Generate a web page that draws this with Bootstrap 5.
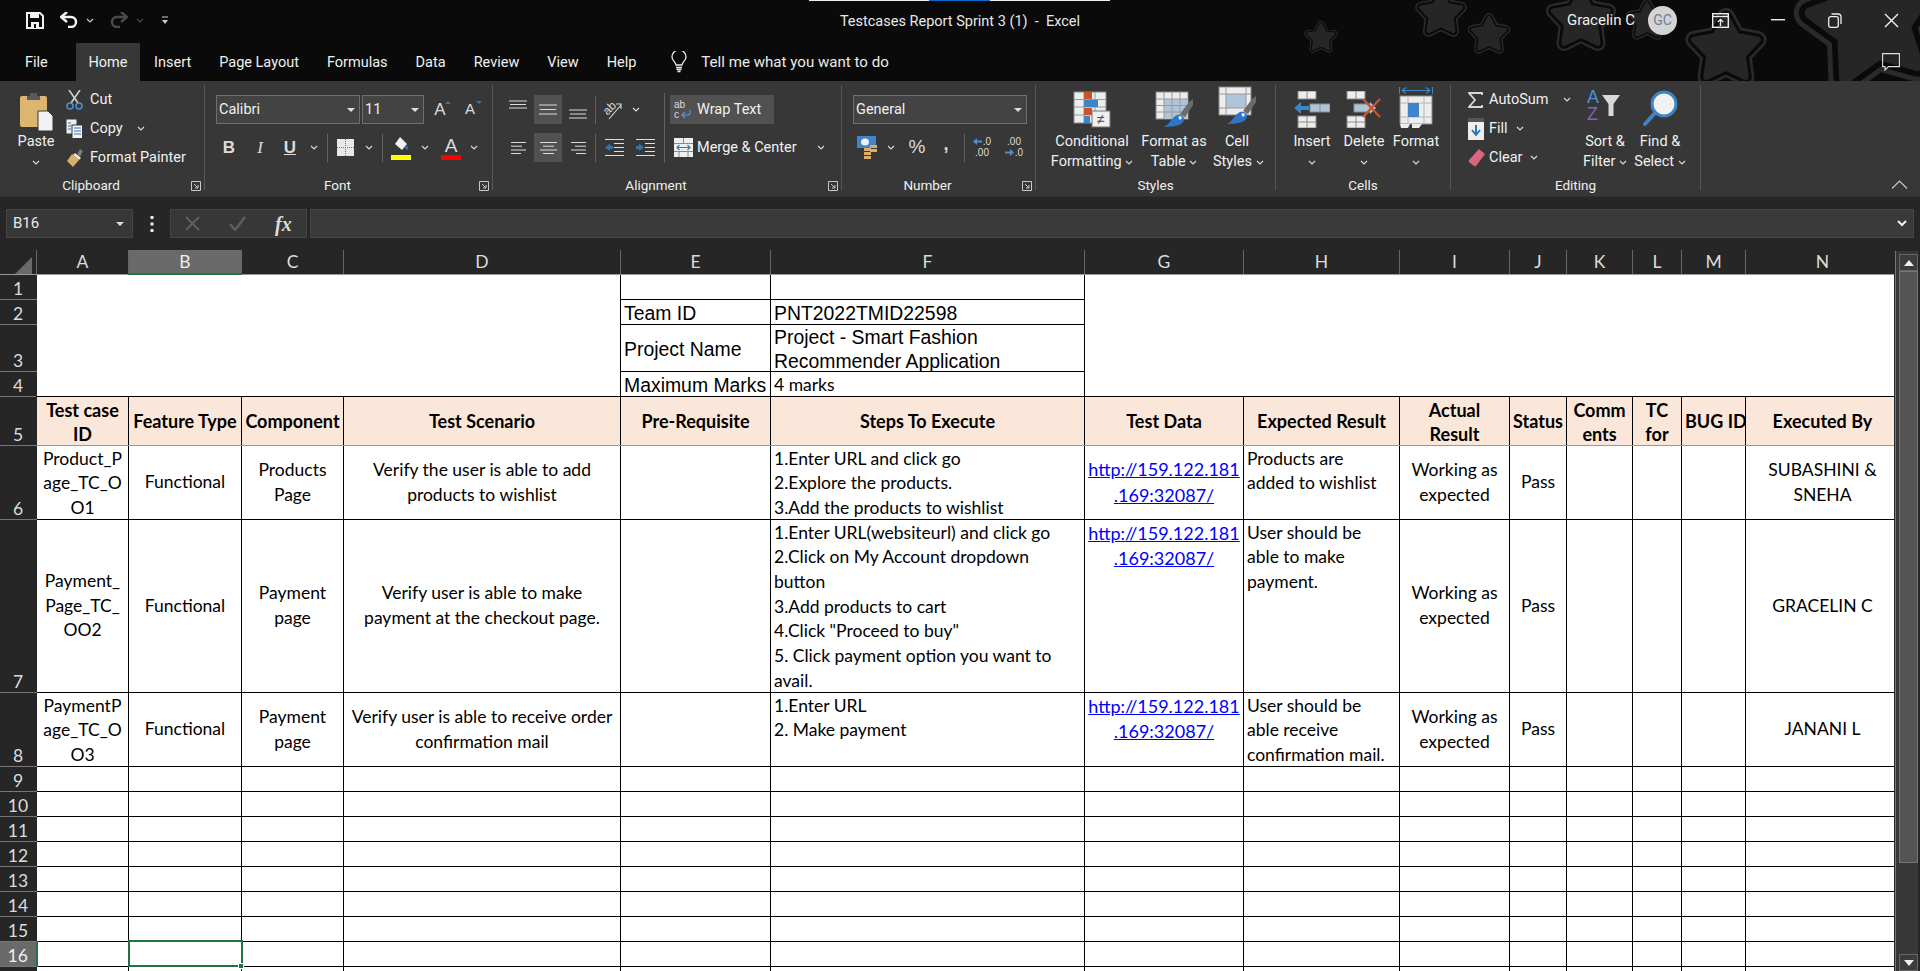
<!DOCTYPE html>
<html lang="en">
<head>
<meta charset="UTF-8">
<title>Testcases Report Sprint 3 (1) - Excel</title>
<link href="https://cdn.jsdelivr.net/npm/bootstrap@5.3.0/dist/css/bootstrap.min.css" rel="stylesheet">
<style>
html, body { height: 100%; overflow: hidden; background: #262626; }
body { font-family: Roboto, "Liberation Sans", sans-serif; font-size: 14.5px; color: #f0f0f0; }
.app { height: 971px; width: 1920px; overflow: hidden; }

/* title bar + tabs */
.xl-top { height: 81px; background: #0a0a0a; position: relative; }
.stars { position: absolute; left: 1300px; top: 0; }
.load-line { position: absolute; left: 809px; top: 0; width: 301px; height: 1px; background: linear-gradient(90deg, #eee 40%, #0a6cc4 40%, #0a6cc4 60%, #eee 60%); }
.title-row { height: 40px; position: relative; }
.qat { padding-left: 26px; }
.doc-title { position: absolute; left: 0; right: 0; top: 0; line-height: 44px; text-align: center; white-space: pre; color: #e8e8e8; pointer-events: none; }
.win-btns { margin-left: auto; position: relative; }
.who { margin-right: 13px; font-size: 15px; }
.avatar { width: 29px; height: 29px; border-radius: 50%; background: #d4d4d4; color: #6a7f9b; font-size: 14px; line-height: 29px; text-align: center; margin-right: 15px; }
.wbtn { width: 57px; text-align: center; line-height: 0; }
.tab-row { height: 41px; position: relative; align-items: stretch; }
.tabx { padding: 2px 14px 0; line-height: 36px; margin-top: 3px; white-space: nowrap; position: relative; }
.tabx.file { padding-left: 25px; width: 76px; }
.tabx.on { background: #373737; padding-left: 12.5px; padding-right: 12.5px; }
.tell { margin-left: 21px; margin-top: 2px; line-height: 41px; color: #eaeaea; font-size: 15.1px; position: relative; }
.tell svg { margin-right: 14px; vertical-align: -6px; }
.cmt { position: absolute; left: 1882px; top: 13px; line-height: 0; }

/* ribbon */
.ribbon { height: 115px; background: #373737; padding: 4px 0 6px; align-items: stretch; }
.rg { height: 105px; border-right: 1px solid #565656; position: relative; flex: none; }
.g-clip { width: 205px; padding-left: 14px; }
.g-font { width: 288px; padding-left: 11px; }
.g-align { width: 349px; padding-left: 10px; }
.g-num { width: 194px; padding-left: 11px; }
.g-style { width: 240px; padding-left: 13px; }
.g-cell { width: 175px; padding-left: 10px; }
.g-edit { width: 250px; padding-left: 15px; }
.rb { height: 86px; }
.rl { position: absolute; left: 0; right: 0; bottom: -6px; height: 20px; line-height: 19px; text-align: center; font-size: 13.5px; }
.rl.wl { padding-right: 22px; }
.launch { position: absolute; right: 3px; bottom: 5px; line-height: 0; }
.r29 { height: 29px; align-items: center; white-space: nowrap; }
.two { padding-top: 10px; }
.two .r29 + .r29 { margin-top: 9px; }
.tb { width: 28px; height: 29px; margin: 0 1px; display: flex; align-items: center; justify-content: center; flex: none; font-family: "Liberation Sans", sans-serif; font-size: 17px; color: #dcdcdc; }
.tb.act { background: #515151; }
.cv { width: 18px; height: 29px; display: flex; align-items: center; justify-content: center; flex: none; }
.sp { width: 1px; height: 28px; background: #636363; flex: none; }
.sp-tall { width: 1px; height: 70px; background: #636363; flex: none; margin: 0 5px 0 0; }
.combo { background: #434343; border: 1px solid #6f6f6f; height: 29px; padding-left: 2px; padding-right: 4px; align-items: center; justify-content: space-between; flex: none; color: #f0f0f0; }
.w144 { width: 144px; }
.w62 { width: 62px; margin-left: 2px; }
.w174 { width: 174px; }
.big { text-align: center; flex: none; line-height: 20px; white-space: nowrap; }
.bico { height: 47px; display: flex; align-items: flex-start; justify-content: center; padding-top: 6px; }
.sico { width: 24px; display: inline-flex; justify-content: flex-start; flex: none; }
.sico-e { width: 21px; margin-left: 2px; display: inline-flex; flex: none; }
.wrapbtn { background: #515151; width: 104px; height: 29px; padding-left: 4px; align-items: center; }
.deci { display: block; font-size: 10px; line-height: 11px; text-align: center; padding-top: 3px; }
.deci svg { vertical-align: 0; margin-right: 1px; }
.rlast { flex: 1 1 auto; position: relative; }
.coll { position: absolute; right: 12px; bottom: 1px; line-height: 0; }

/* formula bar */
.fbar { height: 54px; background: #262626; padding: 12px 6px 12px 6px; align-items: stretch; border-top: 1px solid #2f2f2f; }
.namebox { width: 127px; background: #373737; border: 1px solid #454545; padding: 0 8px 0 6px; align-items: center; justify-content: space-between; color: #e8e8e8; font-size: 15px; }
.fdots { width: 37px; justify-content: center; align-items: center; }
.fbtns { width: 137px; background: #373737; border: 1px solid #454545; align-items: center; gap: 29px; padding-left: 14px; margin-right: 3px; }
.finput { flex: 1 1 auto; background: #3a3a3a; border: 1px solid #454545; align-items: center; justify-content: flex-end; padding-right: 6px; }
.fx-i { font-family: "Liberation Serif", serif; font-style: italic; font-weight: 700; font-size: 20px; color: #dcdcdc; }

/* sheet */
.grid-wrap { height: 721px; overflow: hidden; }
.sheet-box { width: 1894px; flex: none; overflow: hidden; }
.sheet { table-layout: fixed; width: 1863px; border-collapse: collapse; margin: 0; --bs-table-bg: transparent; color: #000; font-family: Lato, "Liberation Sans", sans-serif; font-size: 17.5px; line-height: 24.7px; }
.sheet th, .sheet td { padding: 1px 3px 0; border: 1px solid #000; overflow: hidden; white-space: nowrap; vertical-align: middle; box-shadow: none; }
.sheet td { background: #fff; }
.sheet thead th { background: #262626; color: #dcdcdc; font-weight: 400; text-align: center; height: 24px; border: 0; border-right: 1px solid #666; border-bottom: 1px solid #999; line-height: 22px; padding: 0; }
.sheet thead th.csel { background: #6a6a6a; color: #eee; border-bottom: 2px solid #217346; }
.sheet tbody th { background: #262626; color: #dcdcdc; font-weight: 400; text-align: center; vertical-align: bottom; border: 0; border-bottom: 1px solid #777; border-right: 1px solid #262626; padding: 0; line-height: 20px; }
.sheet tbody th.rsel { background: #6a6a6a; color: #eee; border-right: 2px solid #217346; }
.corner { line-height: 0 !important; vertical-align: bottom !important; text-align: right !important; padding-right: 4px !important; }
.h25 { height: 25px; } .h47 { height: 47px; } .h49 { height: 49px; }
.h74 { height: 74px; } .h173 { height: 173px; }
.sheet td.blank-l { border-top-style: none; border-left-style: none; }
.sheet td.blank-r { border-top-style: none; border-right-style: none; }
.sheet td.arial { font-family: "Liberation Sans", Arial, sans-serif; font-size: 19.4px; line-height: 22px; padding-top: 2px; }
.sheet td.l22 { line-height: 22px; padding-top: 2px; }
.sheet tr.hd td { background: #fbe7da; font-weight: 700; font-size: 18px; text-align: center; border-bottom-color: #999; }
.sheet td.ctr { text-align: center; }
.sheet td.top { vertical-align: top; }
.sheet td a { color: #0000ff; font-size: 18px; }
.sheet td.picked { position: relative; outline: 2px solid #217346; outline-offset: -1px; overflow: visible; }
.grip { position: absolute; right: -3px; bottom: -3px; width: 6px; height: 6px; background: #217346; border: 1px solid #fff; }
/* Excel lets the wrapped lines run slightly over the row, so the box is held at the row height */
.fit2 { height: 47px; }
.fit3 { height: 72px; }
.fit7 { height: 171px; }
.fit-a { height: 46px; line-height: 24px; }

.vscroll { width: 26px; flex: none; background: #262626; padding-top: 1px; }
.vtrack { margin-left: 1px; border-left: 1px solid #777; width: 23px; height: 720px; background: #373737; padding: 3px 0 0 3px; }
.vbtn { height: 17px; width: 19px; background: #3c3c3c; border: 1px solid #666; line-height: 0; text-align: center; padding-top: 5px; }
.vthumb { width: 19px; height: 592px; background: #545454; border: 1px solid #777; margin-top: 0; }
.vfoot { margin-top: 91px; }
</style>
</head>
<body>
<div class="app d-flex flex-column">

  <div class="xl-top">
    <svg class="stars" width="620" height="81" viewBox="0 0 620 81">
      <defs>
        <polygon id="st" points="50,12 61.8,33.8 86.1,38.3 69,56.2 72.3,80.7 50,70 27.7,80.7 31,56.2 13.9,38.3 38.2,33.8" stroke-linejoin="round"></polygon>
        <g id="star">
          <use href="#st" fill="#2a2a2a" stroke="#2a2a2a" stroke-width="20"></use>
          <use href="#st" fill="#0a0a0a" stroke="#0a0a0a" stroke-width="14"></use>
          <use href="#st" fill="#262626" stroke="#262626" stroke-width="7"></use>
        </g>
      </defs>
      <use href="#star" transform="translate(3,20) scale(.36)"></use>
      <use href="#star" transform="translate(113,-14) scale(.56)"></use>
      <use href="#star" transform="translate(166,12) scale(.46)"></use>
      <use href="#star" transform="translate(243,-18) scale(.76)"></use>
      <use href="#star" transform="translate(324,-2) scale(.46)"></use>
      <use href="#star" transform="translate(382,6) scale(.88)"></use>
      <use href="#star" transform="rotate(-10 568 23) translate(490,-60) scale(1.65)"></use>
    </svg>
    <div class="load-line"></div>

    <div class="title-row d-flex align-items-center">
      <div class="qat d-flex align-items-center">
        <svg width="18" height="17" viewBox="0 0 18 17"><path d="M1 1h13l3 3v12H1z" fill="none" stroke="#f2f2f2" stroke-width="2"/><rect x="4" y="1" width="9" height="5" fill="#f2f2f2"/><rect x="5" y="10" width="8" height="6" fill="#f2f2f2"/><rect x="8" y="12" width="2" height="4" fill="#0a0a0a"/></svg>
        <svg class="ms-3" width="18" height="16" viewBox="0 0 18 16"><path d="M2 5h9a5 5 0 0 1 0 10H8" fill="none" stroke="#f2f2f2" stroke-width="2.4"/><path d="M7 0L1 5l6 5" fill="none" stroke="#f2f2f2" stroke-width="2.4"/></svg>
        <svg class="ms-2" width="8" height="5" viewBox="0 0 8 5"><path d="M1 1l3 3 3-3" fill="none" stroke="#ccc" stroke-width="1.2"/></svg>
        <svg class="ms-3" width="18" height="16" viewBox="0 0 18 16"><path d="M16 5H7a5 5 0 0 0 0 10h3" fill="none" stroke="#4a4a4a" stroke-width="2.4"/><path d="M11 0l6 5-6 5" fill="none" stroke="#4a4a4a" stroke-width="2.4"/></svg>
        <svg class="ms-2" width="8" height="5" viewBox="0 0 8 5"><path d="M1 1l3 3 3-3" fill="none" stroke="#4a4a4a" stroke-width="1.2"/></svg>
        <svg style="margin-left:17px" width="8" height="9" viewBox="0 0 8 9"><path d="M1 1h6" stroke="#ccc"/><path d="M1 4h6L4 8z" fill="#ccc"/></svg>
      </div>
      <div class="doc-title">Testcases Report Sprint 3 (1)  -  Excel</div>
      <div class="win-btns d-flex align-items-center">
        <span class="who">Gracelin C</span>
        <div class="avatar">GC</div>
        <div class="wbtn"><svg width="17" height="15" viewBox="0 0 17 15"><rect x=".7" y=".7" width="15.6" height="13.6" fill="none" stroke="#eee" stroke-width="1.4"/><path d="M1 3.500h15" stroke="#eee" stroke-width="1.4"/><path d="M8.500 13V6.500M5.800 9l2.700-2.700L11.200 9" fill="none" stroke="#eee" stroke-width="1.3"/></svg></div>
        <div class="wbtn"><svg width="14" height="2" viewBox="0 0 14 2"><rect width="14" height="1.4" fill="#eee"/></svg></div>
        <div class="wbtn"><svg width="14" height="15" viewBox="0 0 14 15"><rect x=".7" y="3.700" width="9.600" height="10.600" rx="2" fill="none" stroke="#eee" stroke-width="1.3"/><path d="M3.500 1h6.500a3 3 0 0 1 3 3v7" fill="none" stroke="#eee" stroke-width="1.3"/></svg></div>
        <div class="wbtn"><svg width="15" height="15" viewBox="0 0 15 15"><path d="M1 1l13 13M14 1L1 14" stroke="#f4f4f4" stroke-width="1.4"/></svg></div>
      </div>
    </div>

    <div class="tab-row d-flex">
      <div class="tabx file">File</div>
      <div class="tabx on">Home</div>
      <div class="tabx">Insert</div>
      <div class="tabx">Page Layout</div>
      <div class="tabx">Formulas</div>
      <div class="tabx">Data</div>
      <div class="tabx">Review</div>
      <div class="tabx">View</div>
      <div class="tabx">Help</div>
      <div class="tell"><svg width="16" height="22" viewBox="0 0 16 22"><path d="M5 14c0-3-4-4-4-8a7 7 0 0 1 14 0c0 4-4 5-4 8z" fill="none" stroke="#eee" stroke-width="1.3"/><path d="M5 16.500h6M5.500 18.500h5M6.500 20.500h3" stroke="#eee" stroke-width="1.3"/></svg>Tell me what you want to do</div>
      <div class="cmt"><svg width="18" height="18" viewBox="0 0 18 18"><path d="M.6.6h16.800v13H6.500L3 17v-3.400H.6z" fill="none" stroke="#e0e0e0" stroke-width="1.1"/></svg></div>
    </div>
  </div>

  <div class="ribbon d-flex">
    <!-- Clipboard -->
    <div class="rg g-clip">
      <div class="rb d-flex">
        <div class="big" style="width:44px">
          <div class="bico"><svg width="36" height="40" viewBox="0 0 36 40"><rect x="2" y="5" width="27" height="31" rx="2" fill="#dcb56f"/><path d="M9 5h3V2h7v3h3v4H9z" fill="#5a5a5a"/><path d="M20 20h10l5 5v15H20z" fill="#f2f2f2" stroke="#373737"/></svg></div>
          <div>Paste</div>
          <svg width="8" height="5" viewBox="0 0 8 5"><path d="M1 1l3 3 3-3" fill="none" stroke="#ddd" stroke-width="1.1"/></svg>
        </div>
        <div style="margin-left:8px">
          <div class="d-flex r29"><span class="sico"><svg width="17" height="20" viewBox="0 0 17 20"><path d="M3 0l9 13M14 0L5 13" stroke="#d0d0d0" stroke-width="1.6"/><circle cx="4" cy="16" r="3" fill="none" stroke="#4d8fd0" stroke-width="1.5"/><circle cx="13" cy="16" r="3" fill="none" stroke="#4d8fd0" stroke-width="1.5"/></svg></span>Cut</div>
          <div class="d-flex r29"><span class="sico"><svg width="17" height="20" viewBox="0 0 17 20"><rect x=".5" y=".5" width="10" height="14" fill="#eee"/><rect x="6" y="6" width="10.500" height="13.500" fill="#f4f4f4" stroke="#373737"/><path d="M2 4h3M2 7h3M2 10h3" stroke="#2e75b6"/><path d="M8 9h7M8 12h7M8 15h7" stroke="#2e75b6"/></svg></span>Copy<svg style="margin-left:14px" width="8" height="5" viewBox="0 0 8 5"><path d="M1 1l3 3 3-3" fill="none" stroke="#ddd" stroke-width="1.1"/></svg></div>
          <div class="d-flex r29"><span class="sico"><svg width="18" height="19" viewBox="0 0 18 19"><path d="M11 6l3-5 3 2-3 6z" fill="#7a7a7a"/><path d="M9 5l6 5-2 2-6-5z" fill="#e8e8e8"/><path d="M6 6l7 6-6 7-6-6z" fill="#d9ae6a"/></svg></span>Format Painter</div>
        </div>
      </div>
      <div class="rl wl">Clipboard<span class="launch"><svg width="10" height="10" viewBox="0 0 10 10"><path d="M.5 9.500V.5h9v9zM3 3l4 4M7 4v3H4" fill="none" stroke="#c8c8c8"/></svg></span></div>
    </div>

    <!-- Font -->
    <div class="rg g-font">
      <div class="rb two">
        <div class="d-flex r29">
          <div class="combo w144 d-flex">Calibri<svg width="8" height="4" viewBox="0 0 8 4"><path d="M0 0h8L4 4z" fill="#ddd"/></svg></div>
          <div class="combo w62 d-flex">11<svg width="8" height="4" viewBox="0 0 8 4"><path d="M0 0h8L4 4z" fill="#ddd"/></svg></div>
          <div class="tb" style="margin-left:2px;position:relative">A<svg style="position:absolute;right:3px;top:6px" width="6" height="3" viewBox="0 0 6 3"><path d="M0 3h6L3 0z" fill="#2e75b6"/></svg></div>
          <div class="tb" style="font-size:15px;position:relative">A<svg style="position:absolute;right:2px;top:6px" width="6" height="3" viewBox="0 0 6 3"><path d="M0 0h6L3 3z" fill="#2e75b6"/></svg></div>
        </div>
        <div class="d-flex r29" style="margin-left:-2px">
          <div class="tb fw-bold">B</div>
          <div class="tb fst-italic" style="font-family:'Liberation Serif',serif;margin-left:2px">I</div>
          <div class="tb fw-bold text-decoration-underline">U</div>
          <div class="cv"><svg width="8" height="5" viewBox="0 0 8 5"><path d="M1 1l3 3 3-3" fill="none" stroke="#ddd" stroke-width="1.1"/></svg></div>
          <div class="sp ms-1"></div>
          <div class="tb" style="margin-left:3px"><svg width="17" height="17" viewBox="0 0 17 17"><rect width="17" height="17" fill="#e8e8e8"/><path d="M8.500 0v17M0 8.500h17" stroke="#777" stroke-dasharray="1 1"/></svg></div>
          <div class="cv"><svg width="8" height="5" viewBox="0 0 8 5"><path d="M1 1l3 3 3-3" fill="none" stroke="#ddd" stroke-width="1.1"/></svg></div>
          <div class="sp ms-1"></div>
          <div class="tb" style="margin-left:4px"><svg width="20" height="24" viewBox="0 0 20 24"><path d="M9 1l7 7-5 6-7-6z" fill="#f2f2f2"/><path d="M15 9c2 2 3 4 1 5-2-1-2-3-1-5z" fill="#2e75b6"/><rect y="19" width="20" height="5" fill="#ffff00"/></svg></div>
          <div class="cv"><svg width="8" height="5" viewBox="0 0 8 5"><path d="M1 1l3 3 3-3" fill="none" stroke="#ddd" stroke-width="1.1"/></svg></div>
          <div class="tb flex-column" style="margin-left:3px;font-size:19px;line-height:19px">A<span class="d-block" style="width:20px;height:5px;background:#f00"></span></div>
          <div class="cv" style="margin-left:-1px"><svg width="8" height="5" viewBox="0 0 8 5"><path d="M1 1l3 3 3-3" fill="none" stroke="#ddd" stroke-width="1.1"/></svg></div>
        </div>
      </div>
      <div class="rl wl">Font<span class="launch"><svg width="10" height="10" viewBox="0 0 10 10"><path d="M.5 9.500V.5h9v9zM3 3l4 4M7 4v3H4" fill="none" stroke="#c8c8c8"/></svg></span></div>
    </div>

    <!-- Alignment -->
    <div class="rg g-align">
      <div class="rb two d-flex">
        <div style="width:161px;flex:none">
          <div class="d-flex r29">
            <div class="tb"><svg width="18" height="20" viewBox="0 0 18 20"><path d="M0 1h18M1 4.500h16M0 8h18" stroke="#dcdcdc"/></svg></div>
            <div class="tb act"><svg width="18" height="20" viewBox="0 0 18 20"><path d="M0 5h18M1 9.500h16M0 14h18" stroke="#dcdcdc"/></svg></div>
            <div class="tb"><svg width="18" height="20" viewBox="0 0 18 20"><path d="M0 10h18M1 14h16M0 18h18" stroke="#dcdcdc"/></svg></div>
            <div class="sp" style="margin-left:2px"></div>
            <div class="tb" style="margin-left:2px"><svg width="22" height="22" viewBox="0 0 22 22"><text x="3" y="14" transform="rotate(-45 8 11)" font-family="Liberation Sans" font-size="12" fill="#dcdcdc">ab</text><path d="M8 20L20 6M15 5h5v5" fill="none" stroke="#dcdcdc" stroke-width="1.1"/></svg></div>
            <div class="cv"><svg width="8" height="5" viewBox="0 0 8 5"><path d="M1 1l3 3 3-3" fill="none" stroke="#ddd" stroke-width="1.1"/></svg></div>
          </div>
          <div class="d-flex r29">
            <div class="tb"><svg width="15" height="12" viewBox="0 0 15 12"><path d="M0 .5h15M0 4.200h11M0 8h15M0 11.500h10" stroke="#dcdcdc"/></svg></div>
            <div class="tb act"><svg width="17" height="12" viewBox="0 0 17 12"><path d="M0 .5h17M3 4.200h11M0 8h17M3 11.500h11" stroke="#dcdcdc"/></svg></div>
            <div class="tb"><svg width="15" height="12" viewBox="0 0 15 12"><path d="M0 .5h15M4 4.200h11M0 8h15M5 11.500h10" stroke="#dcdcdc"/></svg></div>
            <div class="sp" style="margin-left:2px"></div>
            <div class="tb" style="margin-left:4px"><svg width="19" height="17" viewBox="0 0 19 17"><path d="M0 .5h19M9 4.500h10M9 8.500h10M9 12.500h10M0 16.500h19" stroke="#dcdcdc"/><path d="M0 8.500l5-4v2.500h3v3H5V12z" fill="#2e75b6"/></svg></div>
            <div class="tb" style="margin-left:2px"><svg width="19" height="17" viewBox="0 0 19 17"><path d="M0 .5h19M9 4.500h10M9 8.500h10M9 12.500h10M0 16.500h19" stroke="#dcdcdc"/><path d="M8 8.500l-5-4v2.500H0v3h3V12z" fill="#2e75b6"/></svg></div>
          </div>
        </div>
        <div class="sp-tall" style="margin-top:-2px"></div>
        <div>
          <div class="d-flex wrapbtn r29"><svg width="21" height="19" viewBox="0 0 21 19" style="margin-right:2px"><text x="0" y="8" font-family="Liberation Sans" font-size="10" fill="#dcdcdc">ab</text><text x="0" y="18" font-family="Liberation Sans" font-size="10" fill="#dcdcdc">c</text><path d="M16 10v3a2 2 0 0 1-2 2H8M11 12l-3 3 3 3" fill="none" stroke="#5a9bd8" stroke-width="1.1"/></svg>Wrap Text</div>
          <div class="d-flex r29" style="margin-left:4px"><svg width="19" height="19" viewBox="0 0 19 19" class="me-1"><rect width="19" height="19" fill="#efefef"/><path d="M0 5.500h19M0 13.500h19M9.500 0v5M5 14v5M14 14v5" stroke="#8a8a8a"/><path d="M3 9.500h13M5.500 7L3 9.500 5.500 12M13.500 7L16 9.500 13.500 12" fill="none" stroke="#2e75b6" stroke-width="1.1"/></svg>Merge &amp; Center<svg style="margin-left:20px" width="8" height="5" viewBox="0 0 8 5"><path d="M1 1l3 3 3-3" fill="none" stroke="#ddd" stroke-width="1.1"/></svg></div>
        </div>
      </div>
      <div class="rl wl">Alignment<span class="launch"><svg width="10" height="10" viewBox="0 0 10 10"><path d="M.5 9.500V.5h9v9zM3 3l4 4M7 4v3H4" fill="none" stroke="#c8c8c8"/></svg></span></div>
    </div>

    <!-- Number -->
    <div class="rg g-num">
      <div class="rb two">
        <div class="d-flex r29"><div class="combo w174 d-flex">General<svg width="8" height="4" viewBox="0 0 8 4"><path d="M0 0h8L4 4z" fill="#ddd"/></svg></div></div>
        <div class="d-flex r29">
          <div class="tb ms-0"><svg width="20" height="23" viewBox="0 0 20 23"><rect width="19" height="12" fill="#3f86c9"/><ellipse cx="8" cy="6" rx="4" ry="3.500" fill="#f2f2f2"/><rect x="7" y="12" width="7" height="3" fill="#d9ae6a"/><rect x="7" y="16" width="7" height="3" fill="#d9ae6a"/><rect x="7" y="20" width="7" height="3" fill="#d9ae6a"/><rect x="13" y="9" width="7" height="3" fill="#d9ae6a"/><rect x="13" y="13" width="7" height="3" fill="#d9ae6a"/></svg></div>
          <div class="cv"><svg width="8" height="5" viewBox="0 0 8 5"><path d="M1 1l3 3 3-3" fill="none" stroke="#ddd" stroke-width="1.1"/></svg></div>
          <div class="tb" style="margin-left:3px;font-size:19px">%</div>
          <div class="tb fw-bold" style="margin:0;font-size:18px;padding-bottom:6px">,</div>
          <div class="sp ms-1"></div>
          <div class="tb deci" style="margin-left:3px"><span class="d-block"><svg width="9" height="7" viewBox="0 0 9 7"><path d="M0 3.500L4 0v2.500h5v2H4V7z" fill="#4d8fd0"/></svg>.0</span><span class="d-block">.00</span></div>
          <div class="tb deci" style="margin-left:3px"><span class="d-block">.00</span><span class="d-block"><svg width="9" height="7" viewBox="0 0 9 7"><path d="M9 3.500L5 0v2.500H0v2h5V7z" fill="#4d8fd0"/></svg>.0</span></div>
        </div>
      </div>
      <div class="rl wl">Number<span class="launch"><svg width="10" height="10" viewBox="0 0 10 10"><path d="M.5 9.500V.5h9v9zM3 3l4 4M7 4v3H4" fill="none" stroke="#c8c8c8"/></svg></span></div>
    </div>

    <!-- Styles -->
    <div class="rg g-style">
      <div class="rb d-flex">
        <div class="big" style="width:86px">
          <div class="bico"><svg width="38" height="37" viewBox="0 0 38 37"><rect x="1" y="1" width="32" height="31" fill="#ededed" stroke="#8a8a8a"/><path d="M11 1v31M22 1v31M1 8.500h32M1 16h32M1 24h32" stroke="#9a9a9a"/><rect x="11" y="1" width="8" height="7" fill="#c8532c"/><rect x="11" y="9" width="14" height="7" fill="#3d85c6"/><rect x="11" y="17" width="8" height="7" fill="#c8532c"/><rect x="11" y="25" width="6" height="7" fill="#3d85c6"/><rect x="19" y="20" width="18" height="16" fill="#efefef" stroke="#777"/><text x="24" y="33" font-family="Liberation Sans" font-size="14" fill="#444">&#8800;</text></svg></div>
          <div>Conditional</div>
          <div>Formatting <svg width="8" height="5" viewBox="0 0 8 5"><path d="M1 1l3 3 3-3" fill="none" stroke="#ddd" stroke-width="1.1"/></svg></div>
        </div>
        <div class="big" style="width:78px">
          <div class="bico"><svg width="38" height="36" viewBox="0 0 38 36"><rect x="1" y="1" width="32" height="27" fill="#ededed" stroke="#8a8a8a"/><rect x="9" y="8" width="24" height="20" fill="#b0c4d8"/><path d="M9 1v27M17 1v27M25 1v27M1 8h32M1 14.500h32M1 21h32" stroke="#9a9a9a"/><path d="M38 8v6l-8 12-5-3 9-12z" fill="#6b6b6b"/><path d="M22 24c4-1 7 1 7 4 0 5-6 8-20 8 6-3 8-10 13-12z" fill="#2e75c8"/><path d="M24 25c2 0 3 1 3 2l-2 2c-1-1-2-2-1-4z" fill="#f2f2f2"/></svg></div>
          <div>Format as</div>
          <div>Table <svg width="8" height="5" viewBox="0 0 8 5"><path d="M1 1l3 3 3-3" fill="none" stroke="#ddd" stroke-width="1.1"/></svg></div>
        </div>
        <div class="big" style="width:48px">
          <div class="bico" style="padding-top:1px"><svg width="38" height="40" viewBox="0 0 38 40"><rect x="1" y="1" width="32" height="28" fill="#ededed" stroke="#8a8a8a"/><rect x="8" y="8" width="20" height="14" fill="#b0c4d8"/><path d="M8 1v28M28 1v28M1 8h32M1 22h32" stroke="#9a9a9a"/><path d="M38 10v6l-8 12-5-3 9-12z" fill="#6b6b6b"/><path d="M22 26c4-1 7 1 7 4 0 5-6 8-20 8 6-3 8-10 13-12z" fill="#2e75c8"/><path d="M24 27c2 0 3 1 3 2l-2 2c-1-1-2-2-1-4z" fill="#f2f2f2"/></svg></div>
          <div>Cell</div>
          <div>Styles <svg width="8" height="5" viewBox="0 0 8 5"><path d="M1 1l3 3 3-3" fill="none" stroke="#ddd" stroke-width="1.1"/></svg></div>
        </div>
      </div>
      <div class="rl">Styles</div>
    </div>

    <!-- Cells -->
    <div class="rg g-cell">
      <div class="rb d-flex">
        <div class="big" style="width:52px">
          <div class="bico"><svg width="36" height="37" viewBox="0 0 36 37"><rect x="4" y="0" width="18" height="8" fill="#ededed" stroke="#8a8a8a"/><path d="M13 0v8" stroke="#8a8a8a"/><rect x="16" y="13" width="20" height="8" fill="#b0c4d8" stroke="#8a8a8a"/><path d="M26 13v8" stroke="#8a8a8a"/><path d="M0 17l7-6v4h8v4H7v4z" fill="#3d85c6"/><rect x="4" y="25" width="18" height="12" fill="#ededed" stroke="#8a8a8a"/><path d="M13 25v12M4 31h18" stroke="#8a8a8a"/></svg></div>
          <div>Insert</div>
          <svg width="8" height="5" viewBox="0 0 8 5"><path d="M1 1l3 3 3-3" fill="none" stroke="#ddd" stroke-width="1.1"/></svg>
        </div>
        <div class="big" style="width:52px">
          <div class="bico"><svg width="36" height="37" viewBox="0 0 36 37"><rect x="1" y="0" width="18" height="8" fill="#ededed" stroke="#8a8a8a"/><path d="M10 0v8" stroke="#8a8a8a"/><rect x="8" y="13" width="16" height="8" fill="#b0c4d8" stroke="#8a8a8a"/><path d="M24 11l6 6-6 6z" fill="#b0c4d8"/><rect x="1" y="25" width="18" height="12" fill="#ededed" stroke="#8a8a8a"/><path d="M10 25v12M1 31h18" stroke="#8a8a8a"/><path d="M17 8l17 18M34 8L17 26" stroke="#c8532c" stroke-width="2.400"/></svg></div>
          <div>Delete</div>
          <svg width="8" height="5" viewBox="0 0 8 5"><path d="M1 1l3 3 3-3" fill="none" stroke="#ddd" stroke-width="1.1"/></svg>
        </div>
        <div class="big" style="width:52px">
          <div class="bico" style="padding-top:2px"><svg width="34" height="41" viewBox="0 0 34 41"><path d="M.5 0v7M33.500 0v7" stroke="#3d85c6"/><path d="M3 3.500h28M7 .5L3 3.500l4 3M27 .5l4 3-4 3" fill="none" stroke="#3d85c6" stroke-width="1.1"/><rect x="1" y="9" width="32" height="28" fill="#ededed" stroke="#8a8a8a"/><path d="M9 9v28M25 9v28M1 16h32M1 30h32" stroke="#b5b5b5"/><rect x="9" y="16" width="11" height="14" fill="#3d85c6"/><path d="M1 37h10l-2 4H2zM13 37h10l-3 4h-7z" fill="#ededed"/></svg></div>
          <div>Format</div>
          <svg width="8" height="5" viewBox="0 0 8 5"><path d="M1 1l3 3 3-3" fill="none" stroke="#ddd" stroke-width="1.1"/></svg>
        </div>
      </div>
      <div class="rl">Cells</div>
    </div>

    <!-- Editing -->
    <div class="rg g-edit">
      <div class="rb d-flex">
        <div style="width:111px;flex:none">
          <div class="d-flex r29"><span class="sico-e"><svg width="15" height="16" viewBox="0 0 15 16"><path d="M14 3V1H1l6 7-6 7h13v-2" fill="none" stroke="#d8d8d8" stroke-width="1.8"/></svg></span>AutoSum<svg style="margin-left:14px" width="8" height="5" viewBox="0 0 8 5"><path d="M1 1l3 3 3-3" fill="none" stroke="#ddd" stroke-width="1.1"/></svg></div>
          <div class="d-flex r29"><span class="sico-e"><svg width="16" height="22" viewBox="0 0 16 22"><rect width="16" height="22" fill="#eee"/><rect width="16" height="4" fill="#555"/><path d="M8 7v10M4 12l4 5 4-5" fill="none" stroke="#2e75b6" stroke-width="2"/></svg></span>Fill<svg class="ms-2" width="8" height="5" viewBox="0 0 8 5"><path d="M1 1l3 3 3-3" fill="none" stroke="#ddd" stroke-width="1.1"/></svg></div>
          <div class="d-flex r29"><span class="sico-e"><svg width="17" height="18" viewBox="0 0 17 18"><path d="M11 0l6 5-9 12a2 2 0 0 1-2 0L1 13a2 2 0 0 1 0-2z" fill="#d9667c"/></svg></span>Clear<svg class="ms-2" width="8" height="5" viewBox="0 0 8 5"><path d="M1 1l3 3 3-3" fill="none" stroke="#ddd" stroke-width="1.1"/></svg></div>
        </div>
        <div class="big" style="width:56px">
          <div class="bico" style="padding-top:4px;justify-content:flex-start;padding-left:10px;font-family:'Liberation Sans',sans-serif;font-size:18px;line-height:17px;text-align:left">
            <div><span class="d-block" style="color:#4d8fd0">A</span><span class="d-block" style="color:#8a5fb8">Z</span></div>
            <svg style="margin-left:3px;margin-top:6px;flex:none" width="18" height="21" viewBox="0 0 18 21"><path d="M0 0h18l-6.500 9v12h-5V9z" fill="#d8d8d8"/></svg>
          </div>
          <div>Sort &amp;</div>
          <div>Filter <svg width="8" height="5" viewBox="0 0 8 5"><path d="M1 1l3 3 3-3" fill="none" stroke="#ddd" stroke-width="1.1"/></svg></div>
        </div>
        <div class="big" style="width:54px">
          <div class="bico" style="padding-top:5px"><svg width="35" height="36" viewBox="0 0 35 36"><circle cx="21" cy="14" r="12" fill="#f2f2f2" stroke="#3d85c6" stroke-width="3"/><path d="M12 23L2 34" stroke="#3d85c6" stroke-width="4" stroke-linecap="round"/></svg></div>
          <div>Find &amp;</div>
          <div>Select <svg width="8" height="5" viewBox="0 0 8 5"><path d="M1 1l3 3 3-3" fill="none" stroke="#ddd" stroke-width="1.1"/></svg></div>
        </div>
      </div>
      <div class="rl">Editing</div>
    </div>

    <div class="rlast"><span class="coll"><svg width="17" height="9" viewBox="0 0 17 9"><path d="M1 8.500L8.500 1 16 8.500" fill="none" stroke="#ccc" stroke-width="1.1"/></svg></span></div>
  </div>

  <div class="fbar d-flex">
    <div class="namebox d-flex">B16<svg width="8" height="4" viewBox="0 0 8 4"><path d="M0 0h8L4 4z" fill="#ddd"/></svg></div>
    <div class="fdots d-flex"><svg width="4" height="16" viewBox="0 0 4 16"><rect x=".5" width="3" height="3" fill="#eee"/><rect x=".5" y="6.500" width="3" height="3" fill="#eee"/><rect x=".5" y="13" width="3" height="3" fill="#eee"/></svg></div>
    <div class="fbtns d-flex">
      <svg width="15" height="15" viewBox="0 0 15 15"><path d="M1 1l13 13M14 1L1 14" stroke="#5f5f5f" stroke-width="2"/></svg>
      <svg width="17" height="15" viewBox="0 0 17 15"><path d="M1 8l5 6L16 1" fill="none" stroke="#5f5f5f" stroke-width="2.500"/></svg>
      <span class="fx-i">fx</span>
    </div>
    <div class="finput d-flex"><svg width="10" height="8" viewBox="0 0 10 8"><path d="M1 1l4 4 4-4" fill="none" stroke="#eee" stroke-width="2.200"/></svg></div>
  </div>

  <div class="grid-wrap d-flex">
    <div class="sheet-box">
      <table class="table sheet">
        <colgroup>
          <col style="width:36.5px"><col style="width:92px"><col style="width:113px"><col style="width:102px"><col style="width:277px"><col style="width:150px"><col style="width:314px"><col style="width:159px"><col style="width:156px"><col style="width:110px"><col style="width:57px"><col style="width:66px"><col style="width:49px"><col style="width:64px"><col style="width:154px">
        </colgroup>
        <thead>
          <tr>
            <th class="corner"><svg width="17" height="17" viewBox="0 0 17 17"><path d="M17 0v17H0z" fill="#6a6a6a"/></svg></th>
            <th>A</th><th class="csel">B</th><th>C</th><th>D</th><th>E</th><th>F</th><th>G</th><th>H</th><th>I</th><th>J</th><th>K</th><th>L</th><th>M</th><th>N</th>
          </tr>
        </thead>
        <tbody id="rows">
          <tr class="h25">
            <th>1</th>
            <td class="blank-l" colspan="4" rowspan="4"></td>
            <td></td><td></td>
            <td class="blank-r" colspan="8" rowspan="4"></td>
          </tr>
          <tr class="h25"><th>2</th><td class="arial">Team ID</td><td class="arial">PNT2022TMID22598</td></tr>
          <tr class="h47"><th>3</th><td class="arial">Project Name</td><td class="arial pt-0"><div class="fit-a">Project - Smart Fashion<br>Recommender Application</div></td></tr>
          <tr class="h25"><th>4</th><td class="arial">Maximum Marks</td><td class="l22">4 marks</td></tr>
          <tr class="h49 hd">
            <th>5</th>
            <td><div class="fit2">Test case<br>ID</div></td><td>Feature Type</td><td>Component</td><td>Test Scenario</td><td>Pre-Requisite</td><td>Steps To Execute</td><td>Test Data</td><td>Expected Result</td><td><div class="fit2">Actual<br>Result</div></td><td>Status</td><td><div class="fit2">Comm<br>ents</div></td><td><div class="fit2">TC<br>for</div></td><td>BUG ID</td><td>Executed By</td>
          </tr>
          <tr class="h74">
            <th>6</th>
            <td class="ctr"><div class="fit3">Product_P<br>age_TC_O<br>O1</div></td>
            <td class="ctr">Functional</td>
            <td class="ctr">Products<br>Page</td>
            <td class="ctr">Verify the user is able to add<br>products to wishlist</td>
            <td></td>
            <td><div class="fit3">1.Enter URL and click go<br>2.Explore the products.<br>3.Add the products to wishlist</div></td>
            <td class="ctr"><a href="#">http://159.122.181<br>.169:32087/</a></td>
            <td class="top">Products are<br>added to wishlist</td>
            <td class="ctr">Working as<br>expected</td>
            <td class="ctr">Pass</td><td></td><td></td><td></td>
            <td class="ctr">SUBASHINI &amp;<br>SNEHA</td>
          </tr>
          <tr class="h173">
            <th>7</th>
            <td class="ctr">Payment_<br>Page_TC_<br>OO2</td>
            <td class="ctr">Functional</td>
            <td class="ctr">Payment<br>page</td>
            <td class="ctr">Verify user is able to make<br>payment at the checkout page.</td>
            <td></td>
            <td><div class="fit7">1.Enter URL(websiteurl) and click go<br>2.Click on My Account dropdown<br>button<br>3.Add products to cart<br>4.Click "Proceed to buy"<br>5. Click payment option you want to<br>avail.</div></td>
            <td class="top ctr"><a href="#">http://159.122.181<br>.169:32087/</a></td>
            <td class="top">User should be<br>able to make<br>payment.</td>
            <td class="ctr">Working as<br>expected</td>
            <td class="ctr">Pass</td><td></td><td></td><td></td>
            <td class="ctr">GRACELIN C</td>
          </tr>
          <tr class="h74">
            <th>8</th>
            <td class="ctr"><div class="fit3">PaymentP<br>age_TC_O<br>O3</div></td>
            <td class="ctr">Functional</td>
            <td class="ctr">Payment<br>page</td>
            <td class="ctr">Verify user is able to receive order<br>confirmation mail</td>
            <td></td>
            <td class="top">1.Enter URL<br>2. Make payment</td>
            <td class="top ctr"><a href="#">http://159.122.181<br>.169:32087/</a></td>
            <td class="top"><div class="fit3">User should be<br>able receive<br>confirmation mail.</div></td>
            <td class="ctr">Working as<br>expected</td>
            <td class="ctr">Pass</td><td></td><td></td><td></td>
            <td class="ctr">JANANI L</td>
          </tr>
        </tbody>
      </table>
    </div>
    <div class="vscroll">
      <div class="vtrack">
        <div class="vbtn"><svg width="10" height="6" viewBox="0 0 10 6"><path d="M0 6h10L5 0z" fill="#eee"/></svg></div>
        <div class="vthumb"></div>
        <div class="vbtn vfoot"><svg width="10" height="6" viewBox="0 0 10 6"><path d="M0 0h10L5 6z" fill="#eee"/></svg></div>
      </div>
    </div>
  </div>
</div>
<script>
    // blank rows 9 to 17, B16 is the selected cell. Only the top edge of 17 is in view.
    let rows = document.getElementById("rows");
    for (let r = 9; r <= 17; r++) {
        let tr = document.createElement("tr");
        tr.className = "h25";
        let html = `<th class="${r === 16 ? 'rsel' : ''}">${r < 17 ? r : ''}</th>`;
        for (let c = 0; c < 14; c++) {
            if (r === 16 && c === 1) {
                html += `<td class="picked"><span class="grip"></span></td>`;
            } else {
                html += `<td></td>`;
            }
        }
        tr.innerHTML = html;
        rows.appendChild(tr);
    }
</script>
<script src="https://cdn.jsdelivr.net/npm/bootstrap@5.3.0/dist/js/bootstrap.bundle.min.js"></script>
</body>
</html>
